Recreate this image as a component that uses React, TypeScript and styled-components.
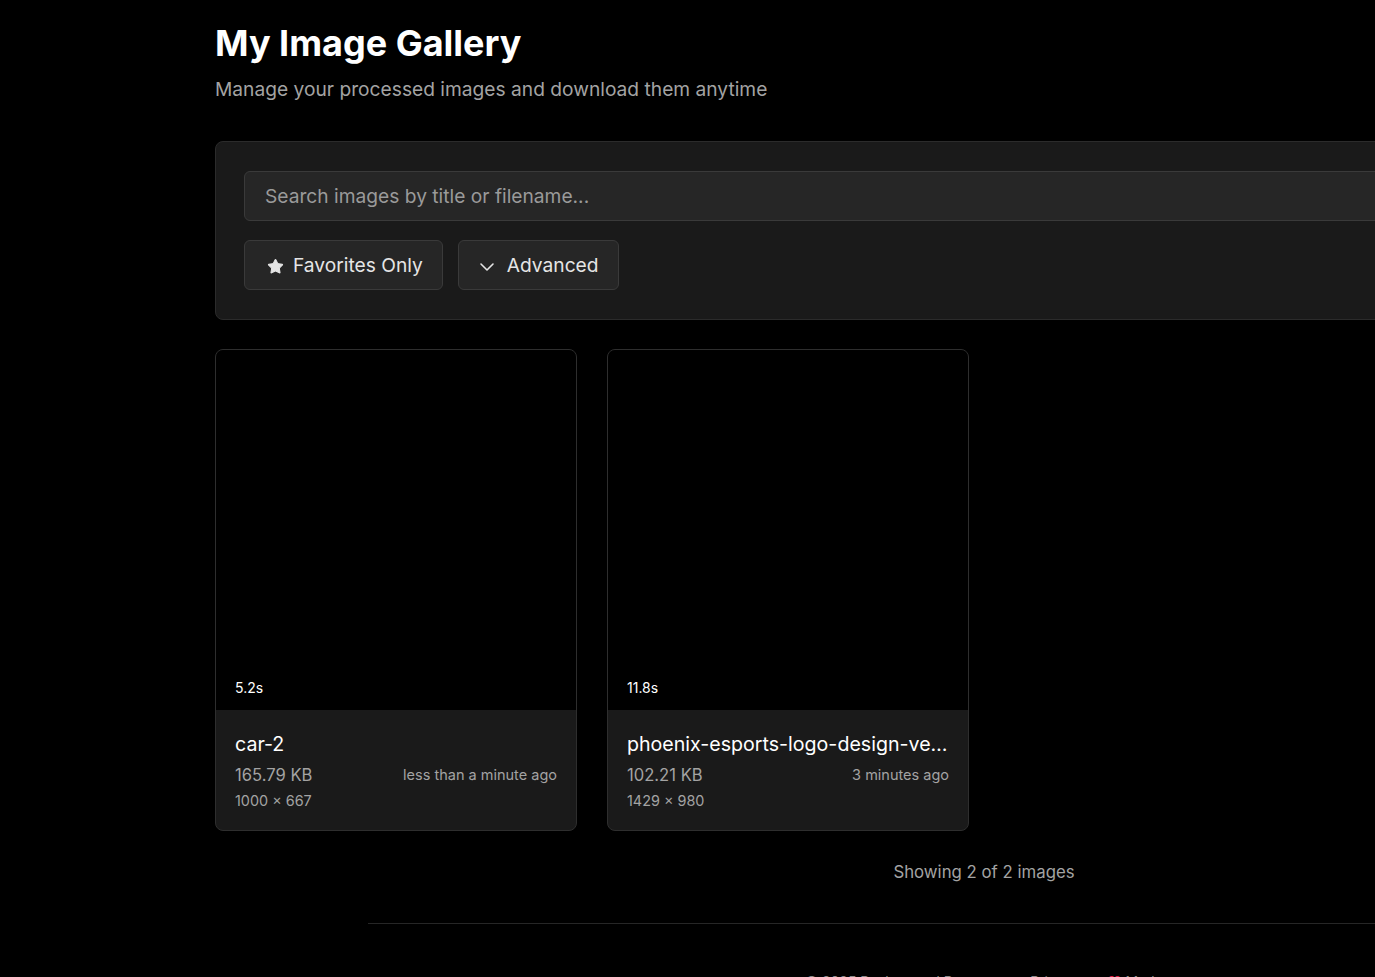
import styled, { createGlobalStyle } from 'styled-components';
import { Star, ChevronDown } from 'lucide-react';

const GlobalStyle = createGlobalStyle`
  html, body {
    margin: 0;
    padding: 0;
    background: #000;
    overflow: hidden;
  }
  body {
    font-family: Inter, "Noto Sans", "Liberation Sans", sans-serif;
    color: #fafafa;
  }
  * { box-sizing: border-box; }
`;

interface GalleryImage {
  id: string,
  title: string,
  duration: string,
  size: string,
  dims: string,
  ago: string,
};

const images: GalleryImage[] = [
  { id: 'a', title: 'car-2', duration: '5.2s', size: '165.79 KB', dims: '1000 × 667', ago: 'less than a minute ago' },
  { id: 'b', title: 'phoenix-esports-logo-design-vector-illustration', duration: '11.8s', size: '102.21 KB', dims: '1429 × 980', ago: '3 minutes ago' },
];

const Page = styled.div`
  width: 1968px;
  min-height: 977px;
`;

const Main = styled.main`
  width: 1538px;
  margin: 0 auto;
  padding-top: 23px;
`;

const Title = styled.h1`
  margin: 0;
  font-size: 36px;
  line-height: 40px;
  font-weight: 700;
  color: #fff;
`;

const Subtitle = styled.p`
  margin: 12px 0 38px;
  font-size: 19.2px;
  line-height: 28px;
  color: #a3a3a3;
`;

const FilterPanel = styled.section`
  background: #1a1a1a;
  border: 1px solid #2b2b2b;
  border-radius: 8px;
  padding: 29px 28px;
`;

const SearchInput = styled.input`
  display: block;
  width: 100%;
  height: 50px;
  padding: 0 20px;
  background: #262626;
  border: 1px solid #3a3a3a;
  border-radius: 6px;
  font-family: inherit;
  font-size: 19.2px;
  color: #fafafa;
  outline: none;
  &::placeholder { color: #9a9a9a; }
`;

const ButtonRow = styled.div`
  display: flex;
  gap: 15px;
  margin-top: 19px;
`;

const FilterButton = styled.button<{ $lead: number; $gap: number }>`
  display: flex;
  align-items: center;
  gap: ${(p) => p.$gap}px;
  height: 50px;
  padding: 0 19px 0 ${(p) => p.$lead}px;
  background: #262626;
  border: 1px solid #3a3a3a;
  border-radius: 6px;
  font-family: inherit;
  font-size: 19.2px;
  color: #e5e5e5;
  cursor: pointer;
  svg { margin-top: 3px; flex-shrink: 0; }
`;

const Grid = styled.div`
  display: grid;
  grid-template-columns: repeat(4, 362px);
  column-gap: 30px;
  margin-top: 29px;
`;

const Card = styled.article`
  border: 1px solid #2e2e2e;
  border-radius: 8px;
  overflow: hidden;
  background: #1a1a1a;
`;

const Thumb = styled.div`
  height: 360px;
  background: #000;
  display: flex;
  align-items: flex-end;
  padding: 0 19px 12px;
`;

const Duration = styled.span`
  font-size: 14px;
  line-height: 20px;
  color: #fff;
`;

const Info = styled.div`
  padding: 20px 19px 19px;
`;

const CardTitle = styled.h3`
  margin: 0;
  font-size: 19.6px;
  line-height: 28px;
  font-weight: 400;
  color: #fff;
  white-space: nowrap;
  overflow: hidden;
  text-overflow: ellipsis;
`;

const MetaRow = styled.div`
  display: flex;
  justify-content: space-between;
  align-items: center;
  margin-top: 5px;
  font-size: 16.6px;
  line-height: 24px;
  color: #a3a3a3;
  small { font-size: 14.5px; }
`;

const Dims = styled.div`
  font-size: 14.4px;
  line-height: 20px;
  color: #a3a3a3;
  margin-top: 4px;
`;

const Count = styled.p`
  margin: 29px 0 0;
  text-align: center;
  font-size: 16.8px;
  line-height: 24px;
  color: #a3a3a3;
`;

const Footer = styled.footer`
  max-width: 1280px;
  margin: 39px auto 0;
  padding: 0 24px;
`;

const FooterInner = styled.div`
  border-top: 1px solid #262626;
  padding-top: 49px;
  display: flex;
  justify-content: center;
  gap: 28px;
  font-size: 14px;
  color: #8a8a8a;
  span.heart { color: #e11d48; }
`;

const ImageCard = (props: { image: GalleryImage }) => {
  const { image } = props;
  return (
    <Card>
      <Thumb>
        <Duration>{image.duration}</Duration>
      </Thumb>
      <Info>
        <CardTitle title={image.title}>{image.title}</CardTitle>
        <MetaRow>
          <span>{image.size}</span>
          <small>{image.ago}</small>
        </MetaRow>
        <Dims>{image.dims}</Dims>
      </Info>
    </Card>
  );
};

const App = () => {
  return (
    <Page>
      <GlobalStyle />
      <Main>
        <Title>My Image Gallery</Title>
        <Subtitle>Manage your processed images and download them anytime</Subtitle>
        <FilterPanel>
          <SearchInput placeholder="Search images by title or filename..." />
          <ButtonRow>
            <FilterButton $lead={22} $gap={9}>
              <Star size={17} fill="#e5e5e5" strokeWidth={1.5} />
              Favorites Only
            </FilterButton>
            <FilterButton $lead={16} $gap={8}>
              <ChevronDown size={24} strokeWidth={1.6} style={{ marginTop: 4 }} />
              Advanced
            </FilterButton>
          </ButtonRow>
        </FilterPanel>
        <Grid>
          { images.map((img) => <ImageCard key={img.id} image={img} />) }
        </Grid>
        <Count>Showing {images.length} of {images.length} images</Count>
      </Main>
      <Footer>
        <FooterInner>
          <span>© 2025 Background Remover</span>
          <span>Privacy</span>
          <span><span className="heart">❤</span> Made</span>
        </FooterInner>
      </Footer>
    </Page>
  );
};

export default App;
